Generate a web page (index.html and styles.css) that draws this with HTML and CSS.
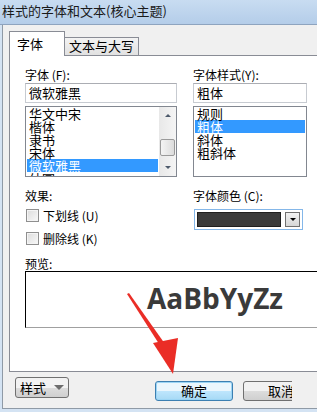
FILE: index.html
```html
<!DOCTYPE html>
<html>
<head>
  <meta charset="UTF-8">
  <title>字体</title>
  <link rel="stylesheet" href="styles.css">
</head>
<body>
  <div class="titlebar">样式的字体和文本(核心主题)</div>

  <div class="frame">
    <div class="tabs">
      <div class="tab active">字体</div>
      <div class="tab">文本与大写</div>
    </div>

    <div class="panel">
      <div class="row">
        <div class="col col-left">
          <div class="label">字体 (F):</div>
          <div class="field">微软雅黑</div>
          <div class="list">
            <ul class="items">
              <li>华文中宋</li>
              <li>楷体</li>
              <li>隶书</li>
              <li>宋体</li>
              <li class="selected">微软雅黑</li>
              <li>幼圆</li>
            </ul>
            <div class="scrollbar">
              <div class="sb-btn"><span class="arrow-up"></span></div>
              <div class="sb-track"><div class="sb-thumb"></div></div>
              <div class="sb-btn"><span class="arrow-down"></span></div>
            </div>
          </div>
        </div>
        <div class="col col-right">
          <div class="label">字体样式(Y):</div>
          <div class="field">粗体</div>
          <div class="list">
            <ul class="items">
              <li>规则</li>
              <li class="selected">粗体</li>
              <li>斜体</li>
              <li>粗斜体</li>
            </ul>
          </div>
        </div>
      </div>

      <div class="row row-effects">
        <div class="col col-left">
          <div class="label">效果:</div>
          <div class="check"><span class="box"></span>下划线 (U)</div>
          <div class="check"><span class="box"></span>删除线 (K)</div>
        </div>
        <div class="col col-right">
          <div class="label">字体颜色 (C):</div>
          <div class="color-select">
            <span class="swatch"></span>
            <span class="drop"><span class="arrow-down black"></span></span>
          </div>
        </div>
      </div>

      <div class="label preview-label">预览:</div>
      <div class="preview">AaBbYyZz</div>
    </div>

    <div class="buttons">
      <div class="btn btn-style">样式 <span class="arrow-down grey"></span></div>
      <div class="btn btn-ok">确定</div>
      <div class="btn-clip"><div class="btn btn-cancel">取消</div></div>
    </div>
  </div>

  <svg class="pointer" width="317" height="412" viewBox="0 0 317 412">
    <path d="M127 294 L129 293 L165 344 L161 347 Z" fill="#ea2d26"/>
    <path d="M153 343 L178 338 L173 374 Z" fill="#ea2d26"/>
  </svg>
</body>
</html>
```

FILE: styles.css
```css
body {
  margin: 0;
  width: 317px;
  height: 412px;
  overflow: hidden;
  background: #d4e3f3;
  font-family: "Noto Sans CJK SC", "DejaVu Sans", sans-serif;
  font-size: 12px;
  color: #000;
  position: relative;
}

.titlebar {
  height: 24px;
  line-height: 21px;
  padding-left: 2px;
  font-size: 13px;
  color: #1a1a1a;
  background: linear-gradient(to bottom, #c8dcf1, #b4cde9);
  border-bottom: 1px solid #8ea4bf;
  white-space: nowrap;
}

.frame {
  margin-left: 2px;
  border-left: 1px solid #8f9aa6;
  background: #f0f0f0;
  border-bottom: 1px solid #8f9aa6;
}

/* tab strip */
.tabs {
  height: 30px;
  display: flex;
  align-items: flex-end;
  padding-left: 6px;
}

.tab {
  height: 17px;
  line-height: 16px;
  padding: 0 3px;
  width: 67px;
  text-align: center;
  font-size: 13px;
  border: 1px solid #898c95;
  border-bottom: none;
  border-left: none;
  background: linear-gradient(to bottom, #f3f3f3, #e1e1e1);
}

.tab.active {
  position: relative;
  z-index: 1;
  height: 24px;
  width: 54px;
  padding: 0;
  line-height: 24px;
  margin-bottom: -1px;
  border-left: 1px solid #898c95;
  background: #fff;
  text-align: left;
  text-indent: 7px;
}

.panel {
  box-sizing: border-box;
  width: 330px;
  height: 317px;
  margin-left: 6px;
  padding: 11px 0 0 15px;
  background: #fff;
  border: 1px solid #898c95;
}

.row {
  display: flex;
  gap: 16px;
}

.col-left {
  width: 152px;
}

.col-right {
  width: 114px;
}

.label {
  height: 16px;
  line-height: 15px;
  white-space: nowrap;
}

.field {
  box-sizing: border-box;
  height: 20px;
  line-height: 18px;
  padding-left: 3px;
  font-size: 13px;
  border: 1px solid #c7cbd1;
  border-top-color: #abadb3;
}

/* list boxes */
.list {
  box-sizing: border-box;
  height: 71px;
  margin-top: 3px;
  border: 1px solid #828790;
  display: flex;
  overflow: hidden;
}

.items {
  flex: 1;
  list-style: none;
  margin: 0;
  padding: 0 1px;
  font-size: 13px;
}

.items li {
  height: 13px;
  line-height: 13px;
  padding-left: 2px;
  white-space: nowrap;
}

.items li.selected {
  background: #3399ff;
  color: #fff;
}

.scrollbar {
  width: 17px;
  display: flex;
  flex-direction: column;
  background: linear-gradient(to right, #e8e8e8, #f5f5f5);
}

.sb-btn {
  height: 17px;
  display: flex;
  align-items: center;
  justify-content: center;
}

.sb-track {
  flex: 1;
  padding-top: 15px;
}

.sb-thumb {
  height: 17px;
  margin: 0 1px;
  border: 1px solid #9a9a9a;
  border-radius: 2px;
  box-sizing: border-box;
  background: linear-gradient(to right, #f4f4f4, #dcdcdc);
}

.arrow-up,
.arrow-down {
  width: 0;
  height: 0;
  border-left: 3px solid transparent;
  border-right: 3px solid transparent;
}

.arrow-up {
  border-bottom: 3px solid #4d5a6b;
}

.arrow-down {
  border-top: 3px solid #4d5a6b;
}

.arrow-down.black {
  border-top-color: #000;
}

.arrow-down.grey {
  border-left-width: 5px;
  border-right-width: 5px;
  border-top: 5px solid #6d6d6d;
}

/* effects and colour */
.row-effects {
  margin-top: 11px;
}

.check {
  height: 23px;
  display: flex;
  align-items: center;
  gap: 4px;
  padding-left: 1px;
  white-space: nowrap;
}

.box {
  width: 13px;
  height: 13px;
  box-sizing: border-box;
  border: 1px solid #8f8f8f;
  background: linear-gradient(135deg, #dcdcdc, #f8f8f8);
  box-shadow: inset 0 0 0 1px #f4f4f4;
}

.color-select {
  box-sizing: border-box;
  width: 109px;
  height: 21px;
  margin: 5px 0 0 1px;
  padding: 2px;
  border: 1px solid #84b7e9;
  display: flex;
  gap: 4px;
  background: #fff;
}

.swatch {
  flex: 1;
  background: #3a3a3a;
  border: 1px solid #1e1e1e;
}

.drop {
  width: 15px;
  box-sizing: border-box;
  border: 1px solid #707070;
  background: linear-gradient(to bottom, #f2f2f2, #d6d6d6);
  display: flex;
  align-items: center;
  justify-content: center;
}

/* preview */
.preview-label {
  margin-top: 7px;
  height: 14px;
  line-height: 14px;
}

.preview {
  box-sizing: border-box;
  width: 380px;
  height: 57px;
  border: 1px solid #000;
  border-bottom-color: #a0a0a0;
  text-align: center;
  font-family: "Open Sans", sans-serif;
  font-weight: bold;
  font-size: 28px;
  line-height: 52px;
  color: #3a3a3a;
}

/* bottom buttons */
.buttons {
  height: 36px;
  display: flex;
  align-items: flex-start;
  padding-left: 12px;
}

.btn {
  box-sizing: border-box;
  height: 20px;
  line-height: 18px;
  font-size: 13px;
  border: 1px solid #707070;
  border-radius: 3px;
  background: linear-gradient(to bottom, #f2f2f2 50%, #dddddd 50%, #cfcfcf);
  text-align: center;
  white-space: nowrap;
}

.btn-style {
  width: 54px;
  height: 21px;
  margin-top: 5px;
  display: flex;
  align-items: center;
  justify-content: center;
  gap: 8px;
}

.btn-ok {
  width: 78px;
  margin: 9px 0 0 86px;
  border-color: #3c7fb1;
  box-shadow: inset 0 0 0 1px #9cd5f5;
  background: linear-gradient(to bottom, #eaf6fd 50%, #bee6fd 50%, #a7d9f5);
}

.btn-clip {
  width: 49px;
  margin: 9px 0 0 10px;
  overflow: hidden;
}

.btn-cancel {
  width: 76px;
}

.pointer {
  position: absolute;
  left: 0;
  top: 0;
  pointer-events: none;
}
```
